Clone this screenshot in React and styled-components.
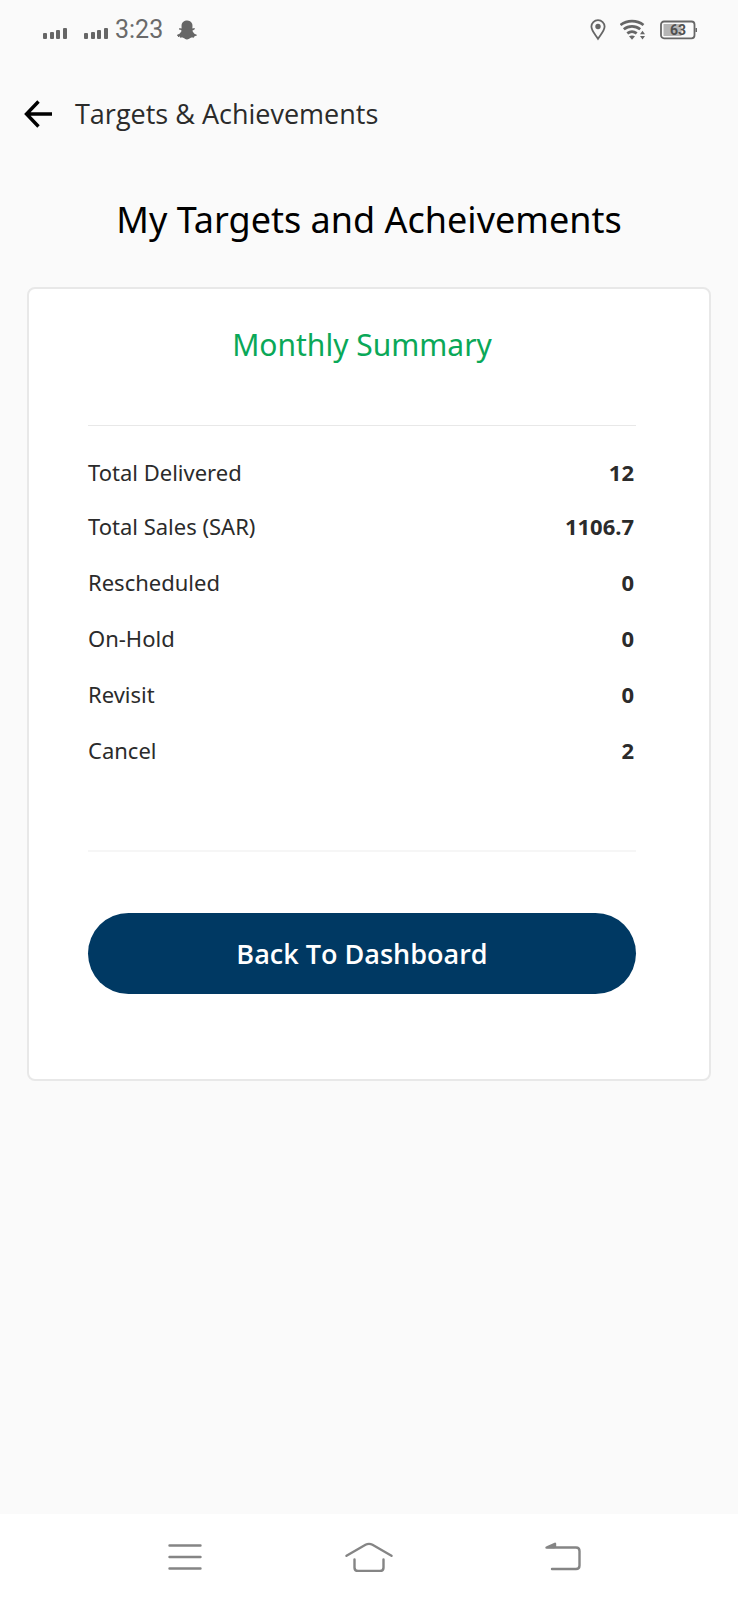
import React from 'react';
import styled, { createGlobalStyle } from 'styled-components';
import { FaSnapchatGhost } from 'react-icons/fa';

const GlobalStyle = createGlobalStyle`
  *, *::before, *::after { box-sizing: border-box; }
  body {
    margin: 0;
    background: #fafafa;
    color: #2b2b2b;
    font-family: "Noto Sans", "Open Sans", sans-serif;
  }
  svg { display: block; flex: none; }
`;

const Page = styled.div`
  display: flex;
  flex-direction: column;
  min-height: 100vh;
`;

const StatusBar = styled.div`
  display: flex;
  align-items: center;
  justify-content: space-between;
  height: 60px;
  padding: 0 41px 0 43px;
  color: #666;
`;

const StatusGroup = styled.div`
  display: flex;
  align-items: center;
  gap: ${({ $gap }) => $gap}px;
`;

const Clock = styled.time`
  font: 400 25px/28px Roboto, sans-serif;
  color: #6a6a6a;
`;

const AppBar = styled.header`
  display: flex;
  align-items: center;
  gap: 22px;
  height: 108px;
  padding: 0 24px;
`;

const BackButton = styled.button`
  display: flex;
  padding: 0;
  border: 0;
  background: none;
  color: #000;
  cursor: pointer;
`;

const ScreenName = styled.p`
  margin: 0;
  font-family: "Open Sans", "Noto Sans", sans-serif;
  font-size: 27px;
  line-height: 40px;
`;

const Main = styled.main`
  flex: 1;
  padding: 28px 27px;
`;

const Title = styled.h1`
  margin: 0 0 43px;
  color: #000;
  font-weight: 400;
  font-size: 36px;
  line-height: 48px;
  text-align: center;
`;

const Card = styled.section`
  display: flex;
  flex-direction: column;
  padding: 35px 73px 85px 59px;
  border: 2px solid #e8e8e8;
  border-radius: 8px;
  background: #fff;
`;

const CardTitle = styled.h2`
  margin: 0 0 59px;
  color: #0aa858;
  font-weight: 400;
  font-size: 30px;
  line-height: 42px;
  text-align: center;
`;

const Divider = styled.hr`
  width: 100%;
  height: ${({ $faint }) => ($faint ? 2 : 1)}px;
  margin: 0;
  border: 0;
  background: ${({ $faint }) => ($faint ? '#f6f6f6' : '#e8e8e8')};
`;

const Summary = styled.table`
  width: 100%;
  margin: 19px 0 72px;
  border-collapse: collapse;
  font-size: 22px;
  line-height: 30px;
`;

const SummaryRow = styled.tr`
  height: 56px;
  &:first-child { height: 53px; }
`;

const Label = styled.th`
  padding: 0;
  font-weight: 400;
  text-align: left;
`;

const Value = styled.td`
  padding: 0 2px 0 0;
  font-weight: 700;
  text-align: right;
`;

const PrimaryButton = styled.button`
  height: 81px;
  margin-top: 61px;
  padding: 0 24px;
  border: 0;
  border-radius: 41px;
  background: #003963;
  color: #fff;
  font: 600 27px/36px "Open Sans", "Noto Sans", sans-serif;
  cursor: pointer;
`;

const SystemNav = styled.nav`
  display: flex;
  align-items: center;
  justify-content: center;
  height: 86px;
  background: #fff;
`;

const NavButton = styled.button`
  display: flex;
  justify-content: center;
  width: 25%;
  padding: 0;
  border: 0;
  background: none;
  color: #858585;
  cursor: pointer;
`;

const Signal = () => (
  <svg width="25" height="36" viewBox="0 0 25 36" fill="currentColor" aria-hidden="true">
    <rect x="0" y="21" width="4" height="6" rx="1" />
    <rect x="7" y="20" width="4" height="7" rx="1" />
    <rect x="13" y="18" width="4" height="9" rx="1" />
    <rect x="20" y="16" width="4" height="11" rx="1" />
  </svg>
);

const LocationPin = () => (
  <svg width="16" height="22" viewBox="0 0 16 22" aria-hidden="true">
    <path
      d="M8 1.2C4.300 1.200 1.400 4 1.400 7.600c0 4.400 4.500 8.600 6.600 12.200 2.100-3.600 6.600-7.800 6.600-12.200 0-3.600-2.900-6.400-6.600-6.400z"
      fill="none"
      stroke="currentColor"
      strokeWidth="1.8"
    />
    <circle cx="8" cy="7.500" r="2.700" fill="currentColor" />
  </svg>
);

const Wifi = () => (
  <svg width="26" height="22" viewBox="0 0 26 22" aria-hidden="true">
    <g fill="none" stroke="currentColor" strokeWidth="2.700">
      <path d="M.5 6C7 .800 17 .800 23.500 6" />
      <path d="M3.800 10.300c4.800-4 11.600-4 16.400 0" />
      <path d="M7.300 14.400c2.900-2.300 6.500-2.300 9.400 0" />
    </g>
    <path d="M9 17.300q3-1.800 6 0l-3 3.500z" fill="currentColor" />
    <path d="M20 15.300l2.500-3.500 2.500 3.500zM20 17h5l-2.500 3.600z" fill="currentColor" />
  </svg>
);

const Battery = () => (
  <svg width="37" height="20" viewBox="0 0 37 20" role="img" aria-label="Battery 63%">
    <rect x="1" y="1.500" width="33.500" height="16.800" rx="3" fill="none" stroke="currentColor" strokeWidth="1.800" />
    <rect x="3.500" y="4" width="18" height="12" fill="#b5b5b5" />
    <rect x="35.500" y="8" width="1.500" height="4" fill="currentColor" />
    <text x="18" y="15" textAnchor="middle" fontFamily="Roboto, sans-serif" fontSize="14" fontWeight="700" fill="#505050">63</text>
  </svg>
);

const BackArrow = () => (
  <svg width="29" height="28" viewBox="0 0 29 28" fill="none" stroke="currentColor" strokeWidth="3.400" aria-hidden="true">
    <path d="M14.500 1.500 2.500 14l12 12.500M3 14h25" />
  </svg>
);

const MenuIcon = () => (
  <svg width="34" height="28" viewBox="0 0 34 28" fill="none" stroke="currentColor" strokeWidth="2.400" strokeLinecap="round" aria-hidden="true">
    <path d="M1.500 2.500h31M1.500 14h31M1.500 25.500h31" />
  </svg>
);

const HomeIcon = () => (
  <svg width="48" height="30" viewBox="0 0 48 30" fill="none" stroke="currentColor" strokeWidth="2.400" strokeLinecap="round" aria-hidden="true">
    <path d="M1.500 13.800 20.500 2.800q3.500-1.800 7 0l19 11" />
    <path d="M9.500 17.500v8q0 3.500 3.500 3.500h22q3.500 0 3.500-3.500v-8" />
  </svg>
);

const ReturnIcon = () => (
  <svg width="54" height="30" viewBox="-18 0 54 30" fill="none" stroke="currentColor" strokeWidth="2.400" strokeLinecap="round" strokeLinejoin="round" aria-hidden="true">
    <path d="M7 27h24q3.500 0 3.500-3.500V9q0-3.500-3.500-3.500H1.500L10 1.800v3.700" />
    <path d="M3 5.500 9.500 2.500v3z" fill="currentColor" strokeWidth="1" />
  </svg>
);

const totals = [
  ['Total Delivered', '12'],
  ['Total Sales (SAR)', '1106.7'],
  ['Rescheduled', '0'],
  ['On-Hold', '0'],
  ['Revisit', '0'],
  ['Cancel', '2'],
];

export default function App() {
  return (
    <Page>
      <GlobalStyle />
      <StatusBar>
        <StatusGroup $gap={14}>
          <StatusGroup $gap={16}>
            <Signal />
            <StatusGroup $gap={6}>
              <Signal />
              <Clock>3:23</Clock>
            </StatusGroup>
          </StatusGroup>
          <FaSnapchatGhost size={20} aria-hidden="true" />
        </StatusGroup>
        <StatusGroup $gap={14}>
          <LocationPin />
          <Wifi />
          <Battery />
        </StatusGroup>
      </StatusBar>
      <AppBar>
        <BackButton type="button" aria-label="Back">
          <BackArrow />
        </BackButton>
        <ScreenName>Targets &amp; Achievements</ScreenName>
      </AppBar>
      <Main>
        <Title>My Targets and Acheivements</Title>
        <Card>
          <CardTitle>Monthly Summary</CardTitle>
          <Divider />
          <Summary>
            <tbody>
              {totals.map(([label, value]) => (
                <SummaryRow key={label}>
                  <Label scope="row">{label}</Label>
                  <Value>{value}</Value>
                </SummaryRow>
              ))}
            </tbody>
          </Summary>
          <Divider $faint />
          <PrimaryButton type="button">Back To Dashboard</PrimaryButton>
        </Card>
      </Main>
      <SystemNav aria-label="System">
        <NavButton type="button" aria-label="Recent apps">
          <MenuIcon />
        </NavButton>
        <NavButton type="button" aria-label="Home">
          <HomeIcon />
        </NavButton>
        <NavButton type="button" aria-label="Back">
          <ReturnIcon />
        </NavButton>
      </SystemNav>
    </Page>
  );
}
